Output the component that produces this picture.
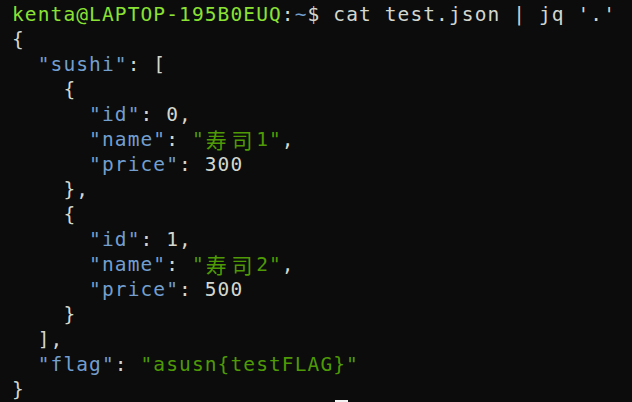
import React from 'react'

const G = 'text-[#8ae234]'
const B = 'text-[#729fcf]'
const S = 'text-[#4e9a06]'
const W = 'text-[#d3d7cf]'

// each line: list of [colorClass, text] segments, '寿司' gets wide cells
const lines = [
  [[G, 'kenta@LAPTOP-195B0EUQ'], [W, ':'], [B, '~'], [W, '$ cat test.json | jq \'.\'']],
  [[W, '{']],
  [[W, '  '], [B, '"sushi"'], [W, ': [']],
  [[W, '    {']],
  [[W, '      '], [B, '"id"'], [W, ': 0,']],
  [[W, '      '], [B, '"name"'], [W, ': '], [S, '"'], ['cjk', '寿司'], [S, '1"'], [W, ',']],
  [[W, '      '], [B, '"price"'], [W, ': 300']],
  [[W, '    },']],
  [[W, '    {']],
  [[W, '      '], [B, '"id"'], [W, ': 1,']],
  [[W, '      '], [B, '"name"'], [W, ': '], [S, '"'], ['cjk', '寿司'], [S, '2"'], [W, ',']],
  [[W, '      '], [B, '"price"'], [W, ': 500']],
  [[W, '    }']],
  [[W, '  ],']],
  [[W, '  '], [B, '"flag"'], [W, ': '], [S, '"asusn{testFLAG}"']],
  [[W, '}']],
]

function Segment({ color, text }) {
  if (color === 'cjk') {
    return (
      <>
        {text.split('').map((ch, i) => (
          <span
            key={i}
            className="inline-block align-top w-[25.7px] h-[25px] text-[#4e9a06] text-[21px] leading-[25px] tracking-normal font-['Noto_Sans_CJK_JP',sans-serif] pl-[1px]"
          >
            {ch}
          </span>
        ))}
      </>
    )
  }
  return <span className={color}>{text}</span>
}

export default function App() {
  return (
    <div className="relative w-[632px] h-[402px] overflow-hidden bg-[#0c0c0c] pl-[12px] pt-[2px]">
      <div className="font-['DejaVu_Sans_Mono',monospace] text-[19.5px] leading-[25px] tracking-[1.11px] whitespace-pre">
        {lines.map((segs, i) => (
          <div key={i} className="h-[25px]">
            {segs.map(([color, text], j) => (
              <Segment key={j} color={color} text={text} />
            ))}
          </div>
        ))}
      </div>

      {/* cursor */}
      <div className="absolute left-[335px] top-[400px] w-[13px] h-[2px] bg-[#f2f2f2]" />
    </div>
  )
}
